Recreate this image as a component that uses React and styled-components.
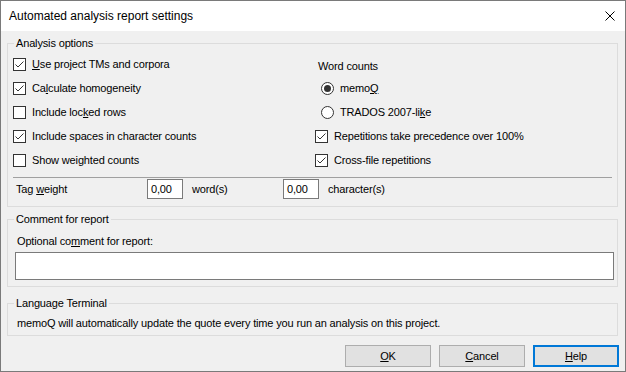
import React from "react";
import styled, { createGlobalStyle } from "styled-components";

const GlobalStyle = createGlobalStyle`
  html, body { margin: 0; padding: 0; background: #f0f0f0; }
  * { box-sizing: border-box; }
`;

const Window = styled.div`
  width: 626px;
  height: 372px;
  border: 1px solid #7a7a7a;
  background: #f0f0f0;
  display: flex;
  flex-direction: column;
  font-family: "Liberation Sans", Arial, sans-serif;
  font-size: 11px;
  letter-spacing: -0.15px;
  color: #000;
`;

const TitleBar = styled.div`
  height: 30px;
  background: #fff;
  display: flex;
  align-items: center;
  justify-content: space-between;
  padding: 0 10px 0 8px;
  font-size: 12px;
  letter-spacing: 0;
  flex-shrink: 0;
`;

const Body = styled.div`
  flex: 1;
  display: flex;
  flex-direction: column;
  padding: 5px 7px 0 6px;
`;

const Group = styled.fieldset`
  margin: ${(p) => p.$mt || 0}px 0 0 0;
  padding: ${(p) => p.$pad || "0"};
  border: 1px solid #dcdcdc;
  min-width: 0;
`;

const Legend = styled.legend`
  margin-left: 6px;
  padding: 0 2px;
  line-height: 15px;
`;

const OptionsGrid = styled.div`
  display: grid;
  grid-template-columns: 302px 1fr;
  grid-auto-rows: 24px;
  padding: 1px 5px 0 5px;
`;

const Cell = styled.label`
  display: flex;
  align-items: center;
  gap: 6px;
  padding-left: ${(p) => p.$indent || 0}px;
  padding-top: ${(p) => p.$shift || 0}px;
  white-space: nowrap;
`;

const Box = styled.span`
  width: 13px;
  height: 13px;
  border: 1px solid #333;
  background: #fff;
  display: inline-flex;
  flex-shrink: 0;
`;

const Radio = styled.span`
  width: 13px;
  height: 13px;
  border: 1px solid #333;
  border-radius: 50%;
  background: #fff;
  display: inline-flex;
  align-items: center;
  justify-content: center;
  flex-shrink: 0;
  &::after {
    content: "";
    width: 7px;
    height: 7px;
    border-radius: 50%;
    background: ${(p) => (p.$on ? "#333" : "transparent")};
  }
`;

const Key = styled.span`
  text-decoration: underline;
  text-underline-offset: 1px;
`;

const Separator = styled.div`
  margin: 5px 5px 0 5px;
  border-top: 1px solid #a0a0a0;
`;

const TagRow = styled.div`
  display: flex;
  align-items: center;
  height: 20px;
  margin: 1px 0 7px 0;
  padding-left: 8px;
`;

const FieldLabel = styled.span`
  width: ${(p) => p.$w}px;
  margin-left: ${(p) => p.$ml || 0}px;
  flex-shrink: 0;
  white-space: nowrap;
`;

const NumInput = styled.div`
  width: 36px;
  height: 20px;
  border: 1px solid #7a7a7a;
  background: #fff;
  padding: 3px 0 0 3px;
  flex-shrink: 0;
`;

const Line = styled.div`
  padding-left: ${(p) => p.$indent || 0}px;
  margin-top: ${(p) => p.$mt || 0}px;
  line-height: 15px;
  white-space: nowrap;
`;

const TextBox = styled.div`
  height: 28px;
  margin: 3px 3px 6px 7px;
  border: 1px solid #7a7a7a;
  background: #fff;
`;

const ButtonRow = styled.div`
  display: flex;
  justify-content: flex-end;
  gap: 8px;
  margin: 9px -1px 0 0;
`;

const Button = styled.button`
  width: 86px;
  height: 22px;
  background: #e1e1e1;
  border: ${(p) => (p.$focus ? "2px solid #0078d7" : "1px solid #adadad")};
  font-family: inherit;
  font-size: 11px;
  letter-spacing: inherit;
  color: #000;
  padding: 0;
  margin: 0;
`;

const Check = ({ on }) => (
  <Box>
    {on && (
      <svg width="11" height="11" viewBox="0 0 11 11">
        <polyline points="1.5,5.5 4,8 9.5,2.5" fill="none" stroke="#333" strokeWidth="1" />
      </svg>
    )}
  </Box>
);

const CloseIcon = () => (
  <svg width="10" height="10" viewBox="0 0 10 10">
    <line x1="0.5" y1="0.5" x2="9.5" y2="9.5" stroke="#000" strokeWidth="1" />
    <line x1="9.5" y1="0.5" x2="0.5" y2="9.5" stroke="#000" strokeWidth="1" />
  </svg>
);

export default function App() {
  return (
    <>
      <GlobalStyle />
      <Window>
        <TitleBar>
          <span>Automated analysis report settings</span>
          <CloseIcon />
        </TitleBar>
        <Body>
          <Group>
            <Legend>Analysis options</Legend>
            <OptionsGrid>
              <Cell>
                <Check on />
                <span><Key>U</Key>se project TMs and corpora</span>
              </Cell>
              <Cell $indent={3} $shift={3}>Word counts</Cell>
              <Cell>
                <Check on />
                <span>Ca<Key>l</Key>culate homogeneity</span>
              </Cell>
              <Cell $indent={6}>
                <Radio $on />
                <span>memo<Key>Q</Key></span>
              </Cell>
              <Cell>
                <Check />
                <span>Include loc<Key>k</Key>ed rows</span>
              </Cell>
              <Cell $indent={6}>
                <Radio />
                <span>TRADOS 2007-li<Key>k</Key>e</span>
              </Cell>
              <Cell>
                <Check on />
                <span>Include spaces in character counts</span>
              </Cell>
              <Cell>
                <Check on />
                <span>Repetitions take precedence over 100%</span>
              </Cell>
              <Cell>
                <Check />
                <span>Show weighted counts</span>
              </Cell>
              <Cell>
                <Check on />
                <span>Cross-file repetitions</span>
              </Cell>
            </OptionsGrid>
            <Separator />
            <TagRow>
              <FieldLabel $w={131}>Tag <Key>w</Key>eight</FieldLabel>
              <NumInput>0,00</NumInput>
              <FieldLabel $w={91} $ml={9}>word(s)</FieldLabel>
              <NumInput>0,00</NumInput>
              <FieldLabel $w={80} $ml={9}>character(s)</FieldLabel>
            </TagRow>
          </Group>

          <Group $mt={5}>
            <Legend>Comment for report</Legend>
            <Line $indent={9} $mt={7}>Optional co<Key>m</Key>ment for report:</Line>
            <TextBox />
          </Group>

          <Group $mt={9} $pad="0 0 4px 0">
            <Legend>Language Terminal</Legend>
            <Line $indent={9} $mt={5}>
              memoQ will automatically update the quote every time you run an analysis on this project.
            </Line>
          </Group>

          <ButtonRow>
            <Button><Key>O</Key>K</Button>
            <Button><Key>C</Key>ancel</Button>
            <Button $focus><Key>H</Key>elp</Button>
          </ButtonRow>
        </Body>
      </Window>
    </>
  );
}
